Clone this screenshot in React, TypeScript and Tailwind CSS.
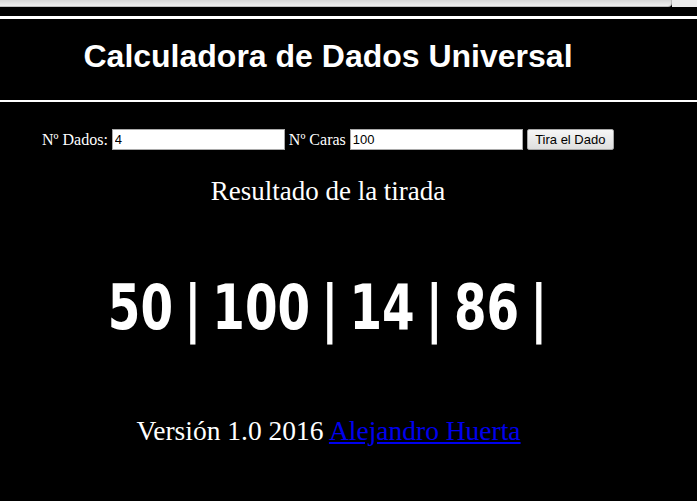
import React from 'react';

const results = [50, 100, 14, 86];

export default function App() {
    return (
        <div className="w-[697px] h-[501px] overflow-hidden bg-black text-white font-['Liberation_Serif','Times_New_Roman',serif]">
            {/* browser chrome remnant */}
            <div className="flex h-[7px]">
                <div className="flex-1 bg-gradient-to-b from-[#d6d6d6] to-[#eeeeee] border-r border-b border-[#bdbdbd] rounded-br-[4px]" />
                <div className="w-[25px] bg-[#ececec]" />
            </div>

            <div className="h-[9px]" />
            <div className="h-[3px] bg-white" />

            <header className="h-[81px] pt-[19px]">
                <h1 className="w-[656px] text-center text-[32px] leading-[37px] font-bold font-['Liberation_Sans',Arial,sans-serif]">
                    Calculadora de Dados Universal
                </h1>
            </header>

            <div className="h-[2px] bg-white" />

            <div className="mt-[27px] ml-[42px] flex items-center gap-[4px] text-[16px] h-[21px]">
                <span>Nº Dados:</span>
                <input
                    defaultValue="4"
                    className="w-[173px] h-[21px] bg-white border border-[#a9a9a9] px-[2px] text-[13px] text-black font-['Liberation_Sans',Arial,sans-serif] outline-none"
                />
                <span>Nº Caras</span>
                <input
                    defaultValue="100"
                    className="w-[173px] h-[21px] bg-white border border-[#a9a9a9] px-[2px] text-[13px] text-black font-['Liberation_Sans',Arial,sans-serif] outline-none"
                />
                <button className="w-[87px] h-[21px] bg-gradient-to-b from-[#f6f6f6] to-[#dedede] border border-[#a6a6a6] rounded-[2px] text-[13px] text-black font-['Liberation_Sans',Arial,sans-serif]">
                    Tira el Dado
                </button>
            </div>

            <p className="mt-[26px] w-[656px] text-center text-[27px] leading-[31px]">
                Resultado de la tirada
            </p>

            <div className="mt-[65px] w-[656px] flex justify-center">
                <span className="inline-block scale-x-[0.84] whitespace-nowrap text-[62px] leading-[72px] font-bold [font-stretch:condensed] [word-spacing:-0.1em] font-['DejaVu_Sans_Condensed','DejaVu_Sans',sans-serif]">
                    {results.map(r => `${r} | `).join('')}
                </span>
            </div>

            <p className="mt-[71px] w-[657px] text-center text-[27.5px] leading-[31px]">
                Versión 1.0 2016{' '}
                <a href="#" className="text-[#0000ee] underline">
                    Alejandro Huerta
                </a>
            </p>
        </div>
    );
}
